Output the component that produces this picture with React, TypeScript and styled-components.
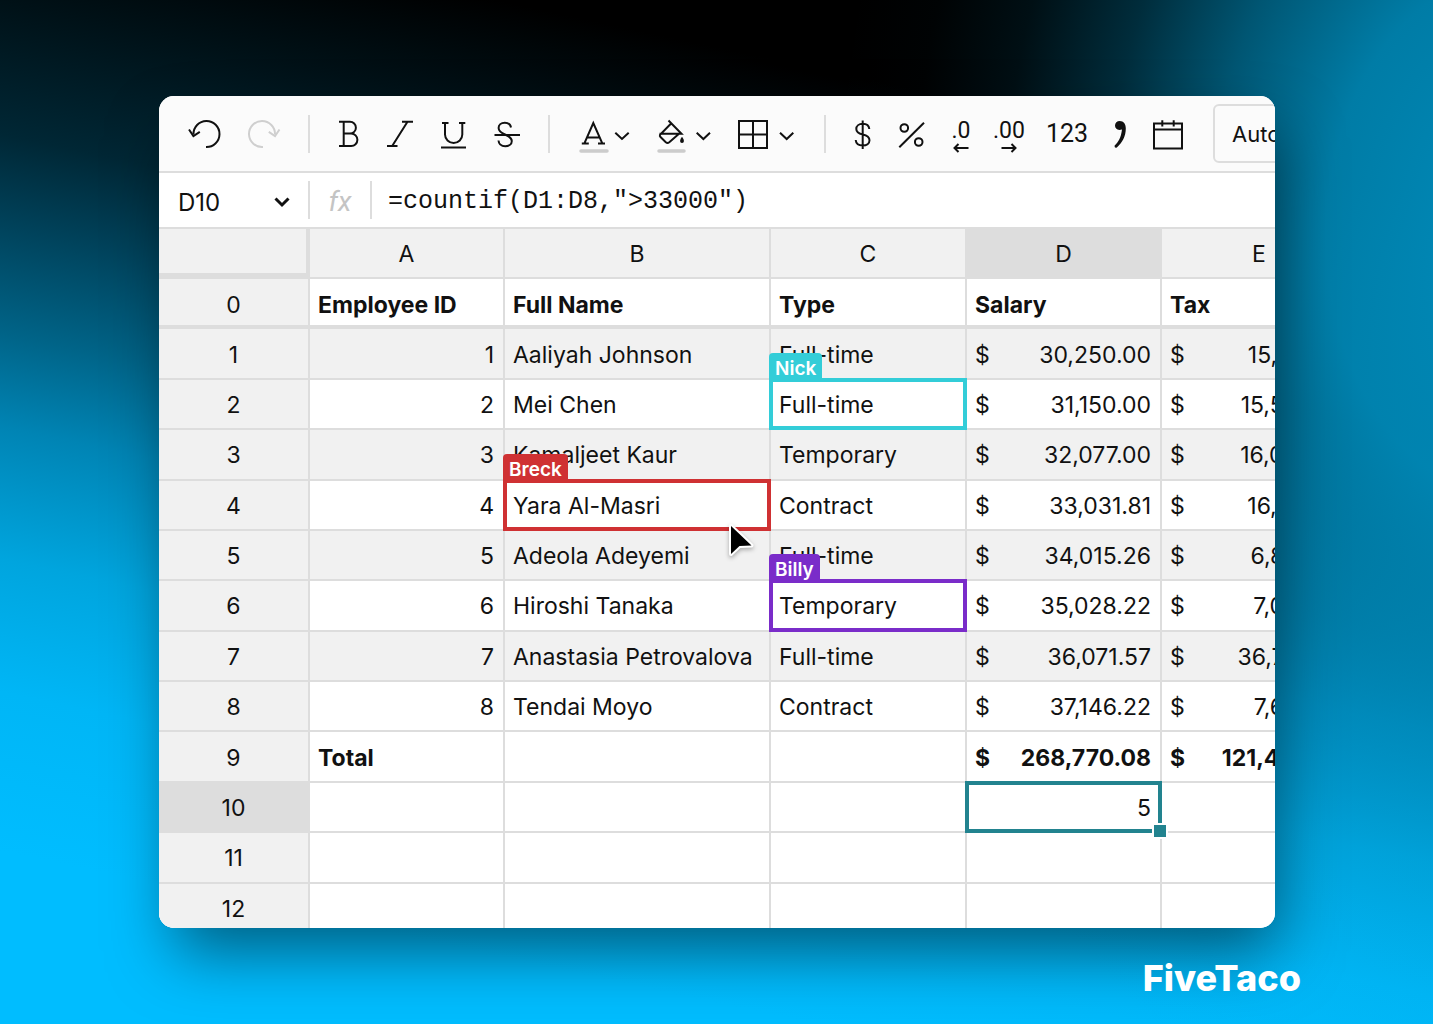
import React, { useState } from "react";
import styled, { createGlobalStyle, css } from "styled-components";

const line = "#dddddd";
const shade = "#f1f1f1";
const sans = '"Inter", "Liberation Sans", sans-serif';

const GlobalStyle = createGlobalStyle`
  *, *::before, *::after { box-sizing: border-box; }
  body { margin: 0; font-family: ${sans}; color: #111; }
`;

const Page = styled.main`
  display: flex;
  flex-direction: column;
  height: 100vh;
  padding-top: 96px;
  overflow: hidden;
  background:
    radial-gradient(ellipse 48% 92% at 106% 23%, rgba(0, 148, 198, 0.94) 0%, rgba(0, 148, 198, 0.84) 28%, rgba(0, 148, 198, 0.58) 45%, rgba(0, 148, 198, 0.3) 60%, rgba(0, 148, 198, 0.1) 75%, rgba(0, 148, 198, 0.02) 88%, rgba(0, 148, 198, 0) 100%),
    linear-gradient(192deg, #000 0%, #000 15%, #001117 23%, #002735 33%, #00435c 40%, #006488 48%, #0084b4 55%, #00a5de 65%, #00b6f6 75%, #00bdff 87%);
`;

const Window = styled.section`
  display: flex;
  flex-direction: column;
  flex: 1;
  min-height: 0;
  margin: 0 158px 0 159px;
  overflow: hidden;
  border-radius: 15px;
  background: #fff;
  box-shadow: 8px 32px 64px -8px rgba(0, 0, 0, 0.5);
`;

const Toolbar = styled.div`
  display: flex;
  flex: none;
  align-items: center;
  height: 77px;
  padding-left: 16px;
  border-bottom: 2px solid ${line};
  background: #fbfbfb;
`;

const Tool = styled.button<{ $width: number }>`
  display: flex;
  flex: none;
  flex-direction: column;
  align-items: center;
  justify-content: center;
  width: ${(p) => p.$width}px;
  height: 49px;
  padding: 0;
  border: 0;
  background: none;
  color: #111;
  &:disabled { color: #cfcfcf; }
`;

const DecimalTool = styled(Tool)`
  justify-content: flex-end;
  padding-bottom: 5px;
`;

const Glyph = styled.svg`
  display: block;
  fill: none;
  stroke: currentColor;
  stroke-width: 2;
`;

const Digits = styled.span<{ $size: number }>`
  font-family: Roboto, sans-serif;
  font-size: ${(p) => p.$size}px;
  line-height: 24px;
`;

const Divider = styled.span<{ $gap: number }>`
  flex: none;
  width: 2px;
  height: 38px;
  margin: 0 ${(p) => p.$gap}px;
  background: ${line};
`;

const FontSelect = styled.select`
  flex: none;
  width: 160px;
  height: 59px;
  margin-left: 20px;
  padding: 0 17px;
  appearance: none;
  border: 2px solid ${line};
  border-radius: 6px;
  background: #fbfbfb;
  color: #111;
  font: 400 22px ${sans};
`;

const FormulaBar = styled.div`
  display: flex;
  flex: none;
  align-items: center;
  height: 56px;
  border-bottom: 2px solid ${line};
  background: #fff;
`;

const NameBox = styled.button`
  display: flex;
  flex: none;
  align-items: center;
  justify-content: space-between;
  width: 149px;
  height: 38px;
  padding: 4px 17px 0 19px;
  border: 0;
  background: none;
  color: #111;
  font: 400 24px ${sans};
`;

const FxLabel = styled.label`
  width: 60px;
  padding-top: 3px;
  color: #c4c4c4;
  font: italic 400 28px Roboto, sans-serif;
  text-align: center;
`;

const FormulaInput = styled.input`
  flex: 1;
  min-width: 0;
  height: 38px;
  padding: 3px 16px 0;
  border: 0;
  outline: 0;
  background: none;
  color: #111;
  font: 400 25px "Liberation Mono", monospace;
`;

const Sheet = styled.table`
  flex: none;
  width: 1199px;
  height: 705px;
  table-layout: fixed;
  border-spacing: 0;
  font-size: 23px;
  line-height: 28px;
`;

const HeadCell = styled.th<{ $active?: boolean }>`
  height: 50px;
  padding: 2px 0 0;
  border-right: 2px solid ${line};
  border-bottom: 2px solid ${line};
  background: ${(p) => (p.$active ? line : shade)};
  font-weight: 400;
`;

const Corner = styled.td`
  height: 50px;
  padding: 0;
  border-right: 4px solid ${line};
  border-bottom: 6px solid ${line};
  background: ${shade};
`;

const Row = styled.tr<{ $striped: boolean; $frozen: boolean }>`
  background: ${(p) => (p.$striped ? shade : "#fff")};
  ${(p) =>
    p.$frozen &&
    css`
      && > th,
      && > td {
        padding-top: 6px;
        border-bottom-width: 4px;
      }
    `}
`;

const Cell = styled.td<{ $bold: boolean; $right: boolean }>`
  position: relative;
  height: 50px;
  padding: 2px 9px 0 8px;
  border-right: 2px solid ${line};
  border-bottom: 2px solid ${line};
  font-weight: ${(p) => (p.$bold ? 700 : 400)};
  text-align: ${(p) => (p.$right ? "right" : "left")};
  white-space: nowrap;
`;

const Money = styled.span`
  display: flex;
  justify-content: space-between;
`;

const Frame = styled.span<{ $color: string }>`
  position: absolute;
  z-index: 1;
  inset: -2px;
  border: 4px solid ${(p) => p.$color};
`;

const Tag = styled.span<{ $color: string }>`
  position: absolute;
  left: -4px;
  bottom: 100%;
  height: 29px;
  padding: 0 6px;
  border-radius: 4px 4px 0 0;
  background: ${(p) => p.$color};
  color: #fff;
  font-size: 19px;
  font-weight: 600;
  line-height: 31px;
`;

const FillHandle = styled.span`
  position: absolute;
  right: -10px;
  bottom: -10px;
  width: 16px;
  height: 16px;
  border: 2px solid #fff;
  background: #22838f;
`;

const Pointer = styled.svg`
  position: absolute;
  z-index: 2;
  right: 9px;
  top: 38px;
  filter: drop-shadow(0 2px 2px rgba(0, 0, 0, 0.3));
`;

const Footer = styled.footer`
  display: flex;
  flex: none;
  align-items: center;
  justify-content: flex-end;
  height: 96px;
  padding-right: 132px;
`;

const Brand = styled.a`
  padding-top: 4px;
  color: #fff;
  font: 800 36px/44px ${sans};
  text-decoration: none;
`;

type IconProps = { width: number; children: React.ReactNode };
const Icon = ({ width, children }: IconProps) => (
  <Glyph width={width} height={49} viewBox={`0 0 ${width} 49`} aria-hidden="true">
    {children}
  </Glyph>
);

const columns = [
  { name: "A", width: 195 },
  { name: "B", width: 266 },
  { name: "C", width: 196 },
  { name: "D", width: 195 },
  { name: "E", width: 196 },
];

type Employee = [string, string, string, string, string];
const employees: Employee[] = [
  ["1", "Aaliyah Johnson", "Full-time", "30,250.00", "15,125.00"],
  ["2", "Mei Chen", "Full-time", "31,150.00", "15,584.00"],
  ["3", "Kamaljeet Kaur", "Temporary", "32,077.00", "16,048.60"],
  ["4", "Yara Al-Masri", "Contract", "33,031.81", "16,195.90"],
  ["5", "Adeola Adeyemi", "Full-time", "34,015.26", "6,803.05"],
  ["6", "Hiroshi Tanaka", "Temporary", "35,028.22", "7,005.64"],
  ["7", "Anastasia Petrovalova", "Full-time", "36,071.57", "36,744.29"],
  ["8", "Tendai Moyo", "Contract", "37,146.22", "7,629.24"],
];

const rows: string[][] = [
  ["Employee ID", "Full Name", "Type", "Salary", "Tax"],
  ...employees,
  ["Total", "", "", "268,770.08", "121,448.84"],
  ["", "", "", "5", ""],
  ["", "", "", "", ""],
  ["", "", "", "", ""],
];

const people: Record<string, { name: string; color: string }> = {
  C2: { name: "Nick", color: "#33cdd8" },
  B4: { name: "Breck", color: "#cf3133" },
  C6: { name: "Billy", color: "#7a2cc9" },
};

const SheetCell = ({ row, col, value }: { row: number; col: number; value: string }) => {
  const id = columns[col].name + row;
  const person = people[id];
  const money = col > 2 && row > 0 && row < 10 && value !== "";
  const right = (col === 0 && row > 0 && row < 9) || (col === 3 && row === 10);
  return (
    <Cell $bold={row === 0 || row === 9} $right={right}>
      {money ? (
        <Money>
          <span>$</span>
          <span>{value}</span>
        </Money>
      ) : (
        value
      )}
      {person && (
        <Frame $color={person.color}>
          <Tag $color={person.color}>{person.name}</Tag>
        </Frame>
      )}
      {id === "D10" && (
        <Frame $color="#22838f">
          <FillHandle />
        </Frame>
      )}
      {id === "B4" && (
        <Pointer width="34" height="40" viewBox="0 0 34 40" aria-hidden="true">
          <path d="M5 7 V35 L13.500 27 L25.500 26.500 Z" fill="#000" stroke="#fff" strokeWidth="4" strokeLinejoin="round" paintOrder="stroke" />
        </Pointer>
      )}
    </Cell>
  );
};

export default function App() {
  const [formula, setFormula] = useState('=countif(D1:D8,">33000")');
  return (
    <>
      <GlobalStyle />
      <Page>
        <Window aria-label="Spreadsheet">
          <Toolbar role="toolbar" aria-label="Formatting">
            <Tool $width={61} aria-label="Undo">
              <Icon width={61}>
                <path d="M31 38 A13 13 0 1 0 18.500 25.500" />
                <path d="M14 20.500 L18.400 27 L24.800 22.800" />
              </Icon>
            </Tool>
            <Tool $width={61} aria-label="Redo" disabled>
              <Icon width={61}>
                <path d="M27 38 A13 13 0 1 1 39 25.500" />
                <path d="M43.500 20.500 L39 27 L32.800 22.800" />
              </Icon>
            </Tool>
            <Divider $gap={11} />
            <Tool $width={54} aria-label="Bold">
              <Icon width={54}>
                <path d="M18 12.800 H29 A5.900 5.900 0 0 1 29 24.600 H22.700 M29 24.600 H30.200 A6.200 6.200 0 0 1 30.200 37 H18 M22.700 12.800 V37" />
              </Icon>
            </Tool>
            <Tool $width={54} aria-label="Italic">
              <Icon width={54}>
                <path d="M27 12.800 H38 M12 37 H22.500 M32.500 12.800 L17.200 37" />
              </Icon>
            </Tool>
            <Tool $width={54} aria-label="Underline">
              <Icon width={54}>
                <path d="M13 14 H19.500 M30 14 H36.300 M16 14 V25.500 A8.600 8.400 0 0 0 33.300 25.500 V14 M12 38.500 H37" />
              </Icon>
            </Tool>
            <Tool $width={54} aria-label="Strikethrough">
              <Icon width={54}>
                <path d="M28 18.500 C27.500 15.500 25 13.800 21.800 13.800 C18 13.800 15.600 16 15.600 19 C15.600 22.500 18.500 24 22 25.500 C26 27.200 28.800 28.700 28.800 32 C28.800 35.200 26 37.200 22.300 37.200 C18.500 37.200 15.800 35.200 15.500 31.500 M11.500 26 H37" />
              </Icon>
            </Tool>
            <Divider $gap={11} />
            <Tool $width={84} aria-label="Text colour">
              <Icon width={84}>
                <path d="M23.500 34.200 L32.300 14 L41.200 34.200 M26.300 28.500 H38.500 M20.800 34.500 H27.800 M37 34.500 H44" />
                <path d="M20 42 H46" stroke="#cccccc" strokeWidth="3.500" strokeLinecap="round" />
                <path d="M54.300 23.700 L61 30 L67.700 23.700" />
              </Icon>
            </Tool>
            <Tool $width={84} aria-label="Fill colour">
              <Icon width={84}>
                <path d="M23.500 11.500 L36.500 24.700 H14.500 M26.300 14.300 L15 25.800 Q14.500 27 15.500 28 L20.800 33.300 Q22.500 34.600 24.300 33.300 L34 24.800" />
                <path d="M37 27.800 C39.500 31 39.500 34 37 34 C34.500 34 34.500 31 37 27.800 Z" fill="currentColor" stroke="none" />
                <path d="M14 42 H39" stroke="#cccccc" strokeWidth="3.500" strokeLinecap="round" />
                <path d="M51.700 23.700 L58.400 30 L65 23.700" />
              </Icon>
            </Tool>
            <Tool $width={84} aria-label="Borders">
              <Icon width={84}>
                <path d="M10 12 H38 V39 H10 Z M24 12 V39 M10 25.500 H38" />
                <path d="M51 23.700 L57.700 30 L64.300 23.700" />
              </Icon>
            </Tool>
            <Divider $gap={11} />
            <Tool $width={50} aria-label="Currency">
              <Icon width={50}>
                <path d="M25.700 11.500 V40 M32.300 20 C32 16.700 29.300 14.800 25.700 14.800 C22 14.800 19.300 17 19.300 20 C19.300 23.500 22 24.700 25.700 25.500 C29.700 26.400 32.500 27.700 32.500 31.200 C32.500 34.500 29.700 36.500 25.700 36.500 C21.800 36.500 19 34.500 18.700 31" />
              </Icon>
            </Tool>
            <Tool $width={50} aria-label="Percent">
              <Icon width={50}>
                <circle cx="17.300" cy="19" r="3.800" />
                <circle cx="31.700" cy="33" r="3.800" />
                <path d="M37 13.700 L12.300 38.300" />
              </Icon>
            </Tool>
            <DecimalTool $width={48} aria-label="Decrease decimal places">
              <Digits $size={23}>.0</Digits>
              <Glyph width="16" height="10" viewBox="0 0 16 10" aria-hidden="true">
                <path d="M15.500 5 H1.500 M5.500 1 L1.500 5 L5.500 9" />
              </Glyph>
            </DecimalTool>
            <DecimalTool $width={48} aria-label="Increase decimal places">
              <Digits $size={23}>.00</Digits>
              <Glyph width="16" height="10" viewBox="0 0 16 10" aria-hidden="true">
                <path d="M0.500 5 H14.500 M10.500 1 L14.500 5 L10.500 9" />
              </Glyph>
            </DecimalTool>
            <Tool $width={68} aria-label="Number format">
              <Digits $size={25}>123</Digits>
            </Tool>
            <Tool $width={40} aria-label="Thousands separator">
              <Icon width={40}>
                <path d="M18.700 12 C22.700 12 24.800 15 24.800 19.500 C24.800 27 21.500 33.500 15.800 38.600 Q13.500 39.500 13.500 36.800 C17.500 33 20 28.500 21 20.500 C16.500 22 14 19.500 14 16.500 C14 14 16 12 18.700 12 Z" fill="currentColor" stroke="none" />
              </Icon>
            </Tool>
            <Tool $width={52} aria-label="Date">
              <Icon width={52}>
                <path d="M13 14.500 H41 V39.500 H13 Z M13 20.500 H41 M21.300 11.300 V17.500 M32.700 11.300 V17.500" />
              </Icon>
            </Tool>
            <FontSelect aria-label="Font size" defaultValue="Auto">
              <option>Auto</option>
            </FontSelect>
          </Toolbar>
          <FormulaBar>
            <NameBox aria-label="Cell D10">
              D10
              <Glyph width="18" height="12" viewBox="0 0 18 12" aria-hidden="true">
                <path d="M2.500 2.500 L9 9 L15.500 2.500" strokeWidth="3" />
              </Glyph>
            </NameBox>
            <Divider $gap={0} />
            <FxLabel htmlFor="formula">fx</FxLabel>
            <Divider $gap={0} />
            <FormulaInput id="formula" spellCheck={false} value={formula} onChange={(e) => setFormula(e.target.value)} />
          </FormulaBar>
          <Sheet>
            <colgroup>
              <col width={151} />
              {columns.map((c) => (
                <col key={c.name} width={c.width} />
              ))}
            </colgroup>
            <thead>
              <tr>
                <Corner />
                {columns.map((c) => (
                  <HeadCell key={c.name} scope="col" $active={c.name === "D"}>
                    {c.name}
                  </HeadCell>
                ))}
              </tr>
            </thead>
            <tbody>
              {rows.map((cells, row) => (
                <Row key={row} $striped={row < 9 && row % 2 === 1} $frozen={row === 0}>
                  <HeadCell scope="row" $active={row === 10}>
                    {row}
                  </HeadCell>
                  {cells.map((value, col) => (
                    <SheetCell key={col} row={row} col={col} value={value} />
                  ))}
                </Row>
              ))}
            </tbody>
          </Sheet>
        </Window>
        <Footer>
          <Brand href="#">FiveTaco</Brand>
        </Footer>
      </Page>
    </>
  );
}
